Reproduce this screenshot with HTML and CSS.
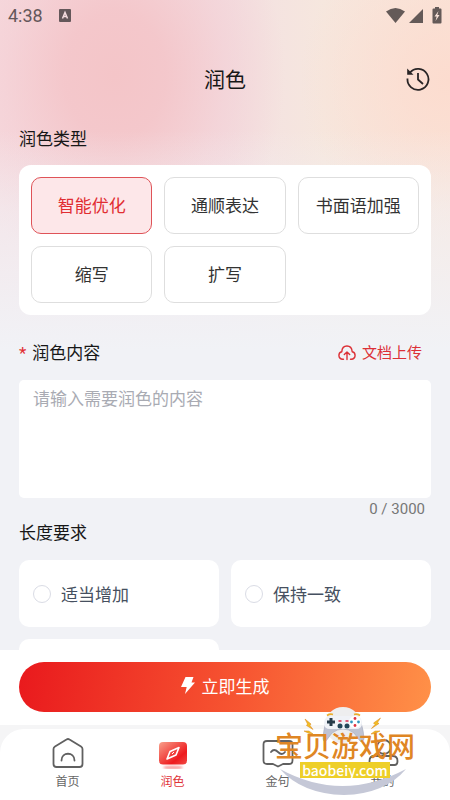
FILE: index.html
```html
<!DOCTYPE html>
<html lang="zh-CN">
<head>
<meta charset="utf-8">
<meta name="viewport" content="width=device-width, initial-scale=1">
<title>润色</title>
<link rel="stylesheet" href="styles.css">
</head>
<body>
<div class="app">
  <div class="status">
    <span class="status-time">4:38</span>
    <svg class="status-app" viewBox="0 0 12 13"><rect width="12" height="13" rx="1" fill="#64575a"/><path d="M3.500 9.500 6 3.500l2.500 6M4.500 7.500h3" fill="none" stroke="#f6dde0" stroke-width="1.500"/></svg>
    <svg class="status-icons" viewBox="0 0 56 17"><g fill="#645a58"><path d="M0 4.500Q9.500-2.500 19 4.500L9.500 16Z"/><path d="M23 16 37 2v14Z"/><path d="M49 1.500V0h4v1.500h1.500q1 0 1 1v13q0 1-1 1h-7q-1 0-1-1v-13q0-1 1-1Z"/></g><path d="m52.500 4-4 5.500h2.200l-1.200 4.500 4-6h-2.200Z" fill="#fae3da"/></svg>
  </div>
  <header class="header">
    <h1>润色</h1>
    <button class="history" type="button" aria-label="history">
      <svg viewBox="0 0 24 24" fill="none" stroke="#292526" stroke-width="1.800"><path d="M4 5.500A10.500 10.500 0 1 1 1.500 11.500"/><path d="M1.200 1.500v6.200h6.300Z" fill="#292526" stroke="none"/><path d="M12 6v6.500l5 4.500"/></svg>
    </button>
  </header>
  <main class="content">
    <h2 class="section-title">润色类型</h2>
    <div class="types">
      <button class="type type-active" type="button">智能优化</button>
      <button class="type" type="button">通顺表达</button>
      <button class="type" type="button">书面语加强</button>
      <button class="type" type="button">缩写</button>
      <button class="type" type="button">扩写</button>
    </div>
    <div class="field-head">
      <label class="section-title" for="text"><span class="required">*</span>润色内容</label>
      <button class="upload" type="button">
        <svg viewBox="0 0 18 16" fill="none" stroke="#dc3036" stroke-width="1.400" stroke-linecap="round" stroke-linejoin="round"><path d="M5.500 14.300H4.800C-.3 13.800-.1 7.500 3.800 6.700 4.300-.8 13.500-.9 14.200 6.700c3.900.8 4.100 7.100-1 7.600h-.7M9 14.500V7M6.300 9.500 9 6.900l2.700 2.600"/></svg>
        文档上传
      </button>
    </div>
    <textarea id="text" class="text" placeholder="请输入需要润色的内容"></textarea>
    <div class="counter">0 / 3000</div>
    <h2 class="section-title">长度要求</h2>
    <div class="lengths">
      <label class="length"><input type="radio" name="length">适当增加</label>
      <label class="length"><input type="radio" name="length">保持一致</label>
      <div class="length"></div>
    </div>
  </main>
  <div class="action">
    <button class="generate" type="button">
      <svg viewBox="0 0 14 17"><path d="M4.500 0H12.500L10.500 5.500H14L4 17 5.700 10H0Z" fill="#fff"/></svg>
      立即生成
    </button>
  </div>
  <div class="nav-wrap">
    <nav class="nav">
      <a class="tab" href="#home">
        <svg viewBox="0 0 32 32" fill="none" stroke="#606060" stroke-width="1.800" stroke-linecap="round" stroke-linejoin="round"><path d="M14.500 2.500q1.500-1 3 0L29 9.500q1.500 1 1.500 2.500v15q0 3-3 3h-23q-3 0-3-3V12q0-1.500 1.500-2.500Z"/><path d="M9.500 23.500c0-9 13-9 13 0"/></svg>
        首页
      </a>
      <a class="tab tab-active" href="#polish">
        <svg viewBox="0 0 32 32"><defs><linearGradient id="tile" x1="0" y1="0" x2="1" y2="1"><stop stop-color="#f8a08b"/><stop offset=".7" stop-color="#ee1b1e"/><stop offset="1" stop-color="#f04a45"/></linearGradient><filter id="soft" x="-30%" y="-100%" width="160%" height="300%"><feGaussianBlur stdDeviation="1.300"/></filter></defs><ellipse cx="16" cy="30.500" rx="10" ry="2" fill="#f9a6a6" filter="url(#soft)"/><rect x="2" y="5" width="28" height="22.500" rx="4" fill="url(#tile)"/><path d="M22 10.500 19 18l-9 4 3-7.500Z" fill="none" stroke="#fff" stroke-width="1.600" stroke-linejoin="round"/><path d="m15 17 2-2" stroke="#fff"/></svg>
        润色
      </a>
      <a class="tab" href="#quotes">
        <svg viewBox="0 0 32 32" fill="none" stroke="#606060" stroke-width="1.800" stroke-linecap="round" stroke-linejoin="round"><path d="M5 4h22q3.500 0 3.500 3.500v16Q30.500 27 27 27h-6l-5 2.500-5-2.500H5q-3.500 0-3.500-3.500v-16Q1.500 4 5 4Z"/><path d="M9 15q3-4 7 0t7 0"/></svg>
        金句
      </a>
      <a class="tab" href="#me">
        <svg viewBox="0 0 32 32" fill="none" stroke="#606060" stroke-width="1.800"><circle cx="17" cy="10" r="7"/><path d="M2.500 28v-4q0-5 5-5h18q5 0 5 5 0 4-3 4Z"/></svg>
        我的
      </a>
    </nav>
  </div>
  <div class="mark">
    <svg class="mark-art" viewBox="0 0 140 90">
      <circle cx="68" cy="18" r="18" fill="#eeeeef"/>
      <path d="M5 62Q67 96 131 62 110 87 69 88 27 87 5 62Z" fill="#c5c8d7"/>
      <path d="M54 12q-5 3-6 20 1 4 3 2l6-8q11-8 22 0l6 8q3 2 4-2-1-17-7-20Z" fill="#bfc3d2" stroke="#a2a7ba" stroke-width=".6"/>
      <path d="M56 9h25q6 1 6 7t-6 6H55q-6 0-6-6t7-7Z" fill="#f0f2f7"/>
      <path d="M52 8.500q3-2 6-1m21 0q3-1 6 1" fill="none" stroke="#e9ad2b" stroke-width="1.800"/>
      <path d="M56 11v8M52 15h8" stroke="#263a48" stroke-width="3"/>
      <g fill="#24475a"><circle cx="65" cy="19" r="2.500"/><circle cx="72" cy="19" r="2.500"/></g>
      <path d="M63.500 14h3M70.500 14h3" stroke="#d82b4d" stroke-width="1.500"/>
      <circle cx="80" cy="15" r="6" fill="#fff"/>
      <g fill="#df3442"><circle cx="80" cy="11.500" r="1.400"/><circle cx="80" cy="18.500" r="1.400"/></g><g fill="#3196bf"><circle cx="76.500" cy="15" r="1.400"/><circle cx="83.500" cy="15" r="1.400"/></g>
      <g fill="#f2be25" stroke="#d9831c" stroke-width=".5"><path d="m30 12 6 5-1 1.500 3 4-6.500-4 1-1.500Z"/><path d="m105.500 11-7 5 1.500 1.500-3.500 4 7.500-5-1.500-1Z"/><path d="m29 24 5 0 4 3-4-.5Z"/><path d="m105 24-5 0-4 3 4-.5Z"/></g>
    </svg>
    <div class="mark-name">宝贝游戏网</div>
    <div class="mark-site">baobeiy.com</div>
  </div>
</div>
</body>
</html>
```
FILE: styles.css
```css
* {
  box-sizing: border-box;
}

body {
  margin: 0;
  font-family: Roboto, "Noto Sans CJK SC", sans-serif;
  color: #171717;
}

button {
  font-family: inherit;
  padding: 0 0 3px;
  border: 0;
  background: none;
}

svg {
  display: block;
  flex: none;
}

.app {
  position: relative;
  display: flex;
  flex-direction: column;
  height: 100vh;
  overflow: hidden;
  background:
    linear-gradient(to bottom, rgba(241, 242, 246, 0) 130px, rgba(241, 242, 246, 0.5) 210px, #f1f2f6 350px),
    radial-gradient(ellipse 170px 210px at 115px 75px, #f4c5c8 0, rgba(244, 197, 201, 0.9) 30%, rgba(244, 200, 206, 0.45) 65%, rgba(244, 205, 212, 0) 100%),
    radial-gradient(circle at 100% 80px, #fcdccf 0, rgba(252, 220, 207, 0.7) 50px, rgba(252, 220, 207, 0) 150px),
    linear-gradient(to right, #f6dce0 0, #f3dfe2 50%, #f6e7de 72%, #f9e5da 100%);
}

.status {
  display: flex;
  align-items: center;
  height: 31px;
  padding: 0 8px;
  color: #64575a;
}

.status-time {
  font-size: 18px;
}

.status-app {
  width: 12px;
  height: 13px;
  margin-left: 16px;
}

.status-icons {
  width: 56px;
  height: 17px;
  margin-left: auto;
}

.header {
  display: grid;
  grid-template-columns: 24px 1fr 24px;
  align-items: center;
  height: 96px;
  padding: 0 20px;
}

.header h1 {
  grid-column: 2;
  margin: 0;
  padding-bottom: 2px;
  font-size: 21px;
  font-weight: 400;
  text-align: center;
}

.history {
  padding: 0;
}

.history svg {
  width: 24px;
  height: 24px;
}

.content {
  flex: 1;
  min-height: 0;
  padding: 0 19px;
  overflow: hidden;
}

.section-title {
  margin: 0;
  font-size: 17px;
  font-weight: 400;
  line-height: 24px;
}

.types {
  display: grid;
  grid-template-columns: repeat(3, 1fr);
  gap: 12px;
  margin-top: 14px;
  padding: 12px;
  border-radius: 12px;
  background: #fff;
}

.type {
  height: 57px;
  border: 1px solid #dedede;
  border-radius: 10px;
  background: #fff;
  color: #333;
  font-size: 17px;
}

.type-active {
  border-color: #df5358;
  background: #fde7e9;
  color: #e12d32;
}

.field-head {
  display: flex;
  align-items: center;
  justify-content: space-between;
  margin-top: 26px;
  padding-right: 9px;
}

.required {
  margin-right: 6px;
  color: #e12d32;
}

.upload {
  display: flex;
  align-items: center;
  gap: 6px;
  padding: 0;
  color: #dc3036;
  font-size: 15px;
  line-height: 22px;
}

.upload svg {
  width: 18px;
  height: 16px;
}

.text {
  display: block;
  width: 100%;
  height: 118px;
  margin-top: 15px;
  padding: 7px 14px;
  border: 0;
  border-radius: 5px;
  background: #fff;
  font-family: inherit;
  font-size: 17px;
  line-height: 24px;
  resize: none;
}

.text::placeholder {
  color: #a9abb3;
}

.counter {
  padding-right: 6px;
  color: #777;
  font-size: 15px;
  line-height: 23px;
  text-align: right;
}

.lengths {
  display: grid;
  grid-template-columns: 1fr 1fr;
  gap: 12px;
  margin-top: 15px;
}

.length {
  display: flex;
  align-items: center;
  gap: 10px;
  height: 67px;
  padding: 0 14px;
  border-radius: 10px;
  background: #fff;
  color: #465060;
  font-size: 17px;
}

.length input {
  appearance: none;
  width: 18px;
  height: 18px;
  margin: 0;
  border: 1px solid #dadce5;
  border-radius: 50%;
}

.action {
  padding: 12px 19px 13px;
  background: #fff;
}

.generate {
  display: flex;
  align-items: center;
  justify-content: center;
  gap: 7px;
  width: 100%;
  height: 50px;
  border-radius: 25px;
  background: linear-gradient(100deg, #e9191d, #f75732 55%, #ff9148);
  color: #fff;
  font-size: 17px;
}

.generate svg {
  width: 14px;
  height: 17px;
}

.nav-wrap {
  padding-top: 4px;
  background: #f5f5f6;
}

.nav {
  display: flex;
  height: 71px;
  padding: 8px 15px 0;
  border-radius: 24px 24px 0 0;
  background: #fff;
}

.tab {
  display: flex;
  flex: 1;
  flex-direction: column;
  align-items: center;
  gap: 4px;
  color: #666;
  font-size: 12px;
  line-height: 18px;
  text-decoration: none;
}

.tab svg {
  width: 32px;
  height: 32px;
}

.tab-active {
  color: #df3439;
}

.mark {
  position: absolute;
  right: 35px;
  bottom: 3px;
  display: flex;
  flex-direction: column;
  align-items: center;
  width: 140px;
  height: 90px;
  padding-top: 27px;
  pointer-events: none;
}

.mark-art {
  position: absolute;
  top: 0;
  left: 0;
  width: 140px;
  height: 90px;
}

.mark-name {
  position: relative;
  color: #df8624;
  font-size: 28px;
  font-weight: 500;
  line-height: 28px;
  white-space: nowrap;
}

.mark-site {
  position: relative;
  padding: 0 2px;
  background: #eecf28;
  color: #fff;
  font-family: "Noto Sans CJK SC", sans-serif;
  font-size: 14px;
  font-weight: 500;
  line-height: 16px;
}
```
